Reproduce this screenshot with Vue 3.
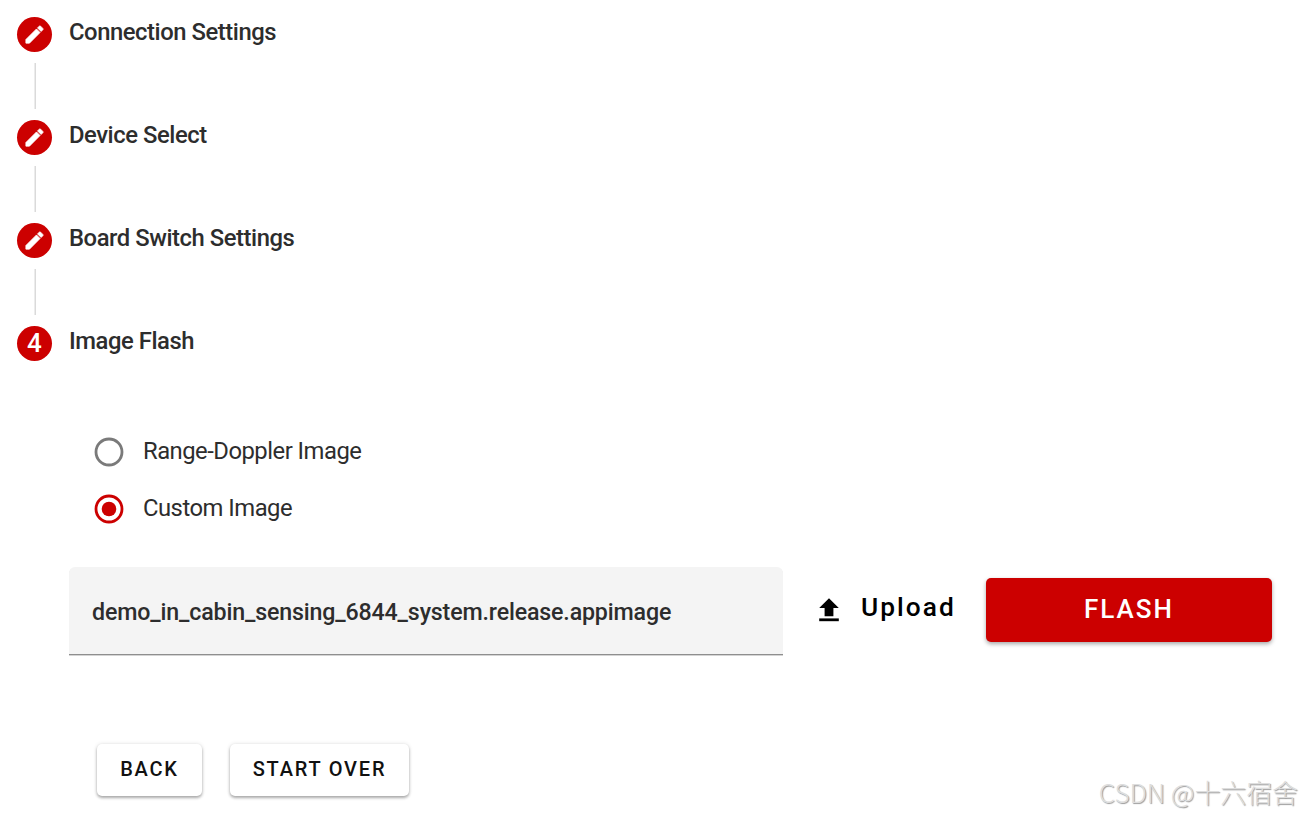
<script setup>
import { ref } from 'vue'

const steps = [
  { id: 1, title: 'Connection Settings' },
  { id: 2, title: 'Device Select' },
  { id: 3, title: 'Board Switch Settings' },
  { id: 4, title: 'Image Flash' }
]

const imageTypes = [
  { value: 'range-doppler', label: 'Range-Doppler Image' },
  { value: 'custom', label: 'Custom Image' }
]

const currentStep = ref(4)
const imageType = ref('custom')
const fileName = ref('demo_in_cabin_sensing_6844_system.release.appimage')

const goBack = () => {
  if (currentStep.value > 1) currentStep.value--
}

const startOver = () => {
  currentStep.value = 1
}
</script>

<template>
  <div class="flash-page">
    <!-- Steps -->
    <div class="stepper">
      <div v-for="step in steps" :key="step.id" class="step">
        <div class="step-rail">
          <div class="step-badge">
            <svg v-if="step.id < currentStep" class="edit-icon" viewBox="0 0 24 24">
              <path d="M3 17.25V21h3.75L17.81 9.94l-3.75-3.75L3 17.25zM20.71 7.04a.996.996 0 0 0 0-1.41l-2.34-2.34a.996.996 0 0 0-1.41 0l-1.83 1.83 3.75 3.75 1.83-1.83z" />
            </svg>
            <span v-else>{{ step.id }}</span>
          </div>
          <div v-if="step.id < steps.length" class="step-line"></div>
        </div>
        <div class="step-title">{{ step.title }}</div>
      </div>
    </div>

    <!-- Image type -->
    <div class="radio-group">
      <label
        v-for="type in imageTypes"
        :key="type.value"
        :class="['radio', { checked: imageType === type.value }]"
        @click="imageType = type.value"
      >
        <svg class="radio-icon" viewBox="0 0 30 30">
          <circle class="ring" cx="15" cy="15" r="13" />
          <circle v-if="imageType === type.value" class="dot" cx="15" cy="15" r="7.3" />
        </svg>
        <span class="radio-label">{{ type.label }}</span>
      </label>
    </div>

    <!-- File row -->
    <div class="file-row">
      <div class="file-field">{{ fileName }}</div>
      <button class="upload-btn">
        <svg class="upload-icon" viewBox="0 0 20 24">
          <path d="M10 0.2L0.2 10H5.6V18.2H14.4V10H19.8Z" />
          <path d="M0.2 20.4H19.8V23.2H0.2Z" />
        </svg>
        <span class="upload-label">Upload</span>
      </button>
      <button class="flash-btn">FLASH</button>
    </div>

    <div class="actions">
      <button class="action-btn back" @click="goBack">BACK</button>
      <button class="action-btn restart" @click="startOver">START OVER</button>
    </div>

    <div class="watermark">CSDN @十六宿舍</div>
  </div>
</template>

<style>
body {
  margin: 0;
  background: #fff;
}
</style>

<style scoped>
.flash-page {
  position: relative;
  box-sizing: border-box;
  width: 1302px;
  height: 816px;
  padding: 17px 17px 0;
  overflow: hidden;
  background: #fff;
  color: #2d2d2d;
  font-family: Roboto, "Liberation Sans", sans-serif;
}

button {
  padding: 0;
  border: none;
  font-family: inherit;
  font-weight: 500;
  cursor: pointer;
}

.step {
  display: flex;
  gap: 17px;
  height: 103px;
}

.step:last-child {
  height: 35px;
}

.step-rail {
  display: flex;
  flex-direction: column;
  align-items: center;
  width: 35px;
}

.step-badge {
  display: flex;
  align-items: center;
  justify-content: center;
  width: 35px;
  height: 35px;
  border-radius: 50%;
  background: #c00;
  color: #fff;
  font-size: 26px;
  font-weight: 500;
  line-height: 35px;
}

.edit-icon {
  width: 23px;
  height: 23px;
  fill: #fff;
  stroke: #fff;
  stroke-width: 0.8px;
}

.step-line {
  width: 1px;
  height: 46px;
  margin-top: 11px;
  margin-left: 1px;
  border-left: 1px solid #ececec;
  background: #dadada;
}

.step-title {
  font-size: 23.8px;
  font-weight: 500;
  letter-spacing: -0.44px;
  line-height: 31px;
}

.radio-group {
  display: flex;
  flex-direction: column;
  gap: 27px;
  margin-top: 76px;
  padding-left: 77px;
}

.radio {
  display: flex;
  align-items: center;
  gap: 19px;
  height: 30px;
  font-size: 23.8px;
  letter-spacing: -0.5px;
  line-height: 30px;
  cursor: pointer;
}

.radio-icon {
  width: 30px;
  height: 30px;
}

.radio-label {
  padding-bottom: 2px;
}

.ring {
  fill: none;
  stroke: #7a7a7a;
  stroke-width: 2.8;
}

.checked .ring {
  stroke: #c00;
}

.dot {
  fill: #c00;
}

.file-row {
  display: flex;
  align-items: flex-start;
  margin-top: 43px;
  padding-left: 52px;
}

.file-field {
  box-sizing: border-box;
  width: 714px;
  height: 88px;
  padding-left: 23px;
  border-bottom: 1px solid #8e8e8e;
  border-radius: 6px 6px 0 0;
  background: #f4f4f4;
  box-shadow: 0 1px 0 #d4d4d4;
  font-size: 23.2px;
  font-weight: 500;
  letter-spacing: -0.15px;
  line-height: 90px;
}

.upload-btn {
  display: flex;
  align-items: center;
  gap: 22px;
  width: 167px;
  height: 64px;
  margin-left: 36px;
  margin-top: 9px;
  background: none;
  color: #000;
  font-size: 26.3px;
  letter-spacing: 2.05px;
}

.upload-icon {
  width: 20px;
  height: 24px;
  margin-top: 3px;
}

.upload-label {
  padding-bottom: 2px;
}

.flash-btn {
  width: 286px;
  height: 64px;
  margin-top: 11px;
  padding-bottom: 2px;
  border-radius: 5px;
  background: #c00;
  box-shadow: 0 2px 4px rgba(0, 0, 0, 0.35);
  color: #fff;
  font-size: 26px;
  letter-spacing: 2px;
}

.actions {
  display: flex;
  gap: 28px;
  margin-top: 89px;
  padding-left: 80px;
}

.action-btn {
  height: 52px;
  padding-bottom: 2px;
  border-radius: 5px;
  background: #fff;
  box-shadow: 0 2px 3px rgba(0, 0, 0, 0.3), 0 0 4px rgba(0, 0, 0, 0.12);
  color: #111;
  font-size: 20px;
  letter-spacing: 1.8px;
}

.back {
  width: 105px;
}

.restart {
  width: 179px;
}

.watermark {
  position: absolute;
  right: 4px;
  bottom: 5px;
  color: #dedede;
  font-family: "Noto Sans CJK SC", sans-serif;
  font-weight: 300;
  font-size: 25.9px;
  line-height: 38px;
  white-space: nowrap;
  text-shadow: 1px 1px 1px #999;
}
</style>
